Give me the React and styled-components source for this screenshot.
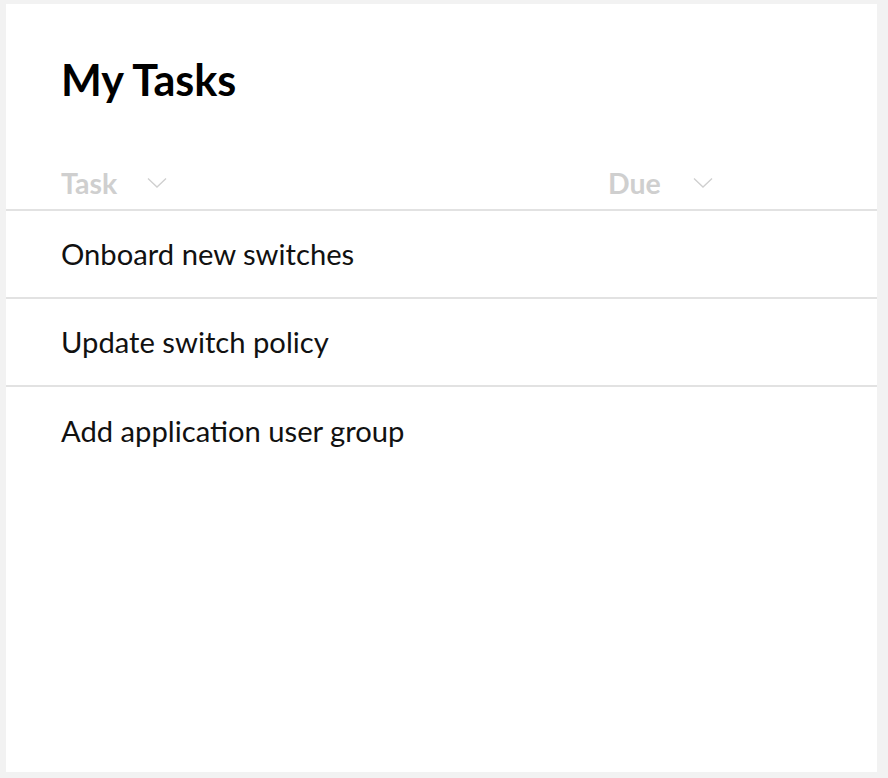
import React from 'react';
import styled, { createGlobalStyle } from 'styled-components';

const GlobalStyle = createGlobalStyle`
  html, body {
    margin: 0;
    background: #f2f2f2;
  }
  body {
    padding: 4px 11px 6px 6px;
    font-family: Lato, "Noto Sans", sans-serif;
  }
`;

const Card = styled.div`
  background: #fff;
  height: 768px;
  box-sizing: border-box;
  padding-top: 51px;
`;

const Title = styled.h1`
  margin: 0 0 54px;
  padding-left: 55px;
  font-size: 43.2px;
  font-weight: 700;
  line-height: 48px;
  color: #000;
`;

const Row = styled.div`
  display: grid;
  grid-template-columns: 547px 1fr;
  align-items: center;
  padding-left: 55px;
  padding-bottom: ${p => (p.$head ? 0 : 2)}px;
  height: ${p => p.$height}px;
  border-bottom: ${p => (p.$last ? 'none' : '2px solid #e2e2e2')};
  box-sizing: border-box;
`;

const HeadCell = styled.div`
  display: flex;
  align-items: center;
  gap: ${p => p.$gap}px;
  font-size: 28.5px;
  font-weight: 700;
  color: #cfcfcf;
`;

const Cell = styled.div`
  font-size: 29.2px;
  color: #111;
`;

const Chevron = () => (
  <svg width="20" height="12" viewBox="0 0 20 12" fill="none">
    <path d="M1 1.5 L10 10 L19 1.5" stroke="#cfcfcf" strokeWidth="1.3" />
  </svg>
);

const tasks = ['Onboard new switches', 'Update switch policy', 'Add application user group'];

export default function App() {
  return (
    <>
      <GlobalStyle />
      <Card>
        <Title>My Tasks</Title>
        <Row $height={54} $head>
          <HeadCell $gap={30}>Task <Chevron /></HeadCell>
          <HeadCell $gap={32}>Due <Chevron /></HeadCell>
        </Row>
        {tasks.map((t, i) => (
          <Row key={t} $height={88} $last={i === tasks.length - 1}>
            <Cell>{t}</Cell>
            <Cell />
          </Row>
        ))}
      </Card>
    </>
  );
}
